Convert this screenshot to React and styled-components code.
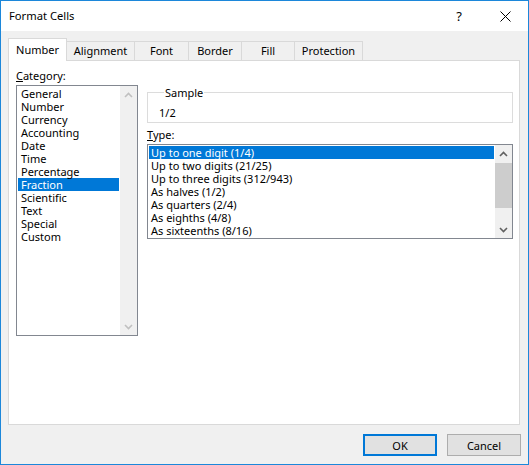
import React from "react";
import styled, { createGlobalStyle } from "styled-components";

const Global = createGlobalStyle`
  html, body { margin: 0; padding: 0; background: #ffffff; }
  body { font-family: "Noto Sans", "Open Sans", sans-serif; font-size: 11px; color: #000; }
  * { box-sizing: border-box; }
`;

const Window = styled.div`
  width: 529px;
  height: 465px;
  border: 1px solid #1c87da;
  display: flex;
  flex-direction: column;
  background: #f0f0f0;
`;

const TitleBar = styled.div`
  height: 30px;
  background: #ffffff;
  display: flex;
  align-items: center;
  padding-left: 8px;
  font-size: 11.2px;
  flex-shrink: 0;
`;

const Title = styled.div`
  flex: 1;
  margin-top: -1px;
`;

const TitleButton = styled.div`
  width: ${(p) => p.$w}px;
  height: 30px;
  display: flex;
  align-items: center;
  justify-content: center;
  font-size: 13px;
`;

const TabStrip = styled.div`
  display: flex;
  align-items: flex-end;
  padding: 7px 0 0 7px;
  height: 29px;
  flex-shrink: 0;
`;

const Tab = styled.div`
  position: relative;
  height: ${(p) => (p.$active ? 23 : 19)}px;
  width: ${(p) => p.$w}px;
  margin-bottom: ${(p) => (p.$active ? -1 : 0)}px;
  background: ${(p) => (p.$active ? "#ffffff" : "#f0f0f0")};
  border: 1px solid #d9d9d9;
  border-left-width: ${(p) => (p.$first || p.$active ? 1 : 0)}px;
  border-bottom: none;
  z-index: ${(p) => (p.$active ? 2 : 1)};
  display: flex;
  justify-content: center;
  padding-top: ${(p) => (p.$active ? 3 : 1)}px;
  line-height: 15px;
`;

const Panel = styled.div`
  margin: 0 8px 0 7px;
  height: 365px;
  background: #ffffff;
  border: 1px solid #d9d9d9;
  display: grid;
  grid-template-columns: 122px 365px;
  column-gap: 9px;
  padding: 7px 0 0 7px;
  flex-shrink: 0;
`;

const Column = styled.div`
  display: flex;
  flex-direction: column;
  padding-top: ${(p) => p.$top || 0}px;
`;

const Label = styled.div`
  line-height: 15px;
  height: 15px;
  margin-bottom: 2px;
`;

const ListBox = styled.div`
  height: ${(p) => p.$h}px;
  width: ${(p) => p.$w}px;
  border: 1px solid #828790;
  display: flex;
  background: #fff;
`;

const Items = styled.div`
  flex: 1;
  padding: 1px;
`;

const Item = styled.div`
  height: 13px;
  line-height: 13px;
  padding-left: ${(p) => p.$indent}px;
  white-space: nowrap;
  background: ${(p) => (p.$sel ? "#0078d7" : "transparent")};
  color: ${(p) => (p.$sel ? "#ffffff" : "#000000")};
`;

const ScrollBar = styled.div`
  width: 17px;
  background: #f0f0f0;
  display: flex;
  flex-direction: column;
`;

const ScrollArrow = styled.div`
  height: 17px;
  display: flex;
  align-items: center;
  justify-content: center;
  flex-shrink: 0;
`;

const Track = styled.div`
  flex: 1;
  padding-top: 1px;
`;

const Thumb = styled.div`
  height: 45px;
  background: #cdcdcd;
`;

const GroupBox = styled.fieldset`
  margin: 0;
  padding: 7px 0 0 11px;
  border: 1px solid #dcdcdc;
  height: 38px;
  min-width: 0;
  width: 366px;
`;

const Legend = styled.legend`
  padding: 0 1px;
  margin-left: 5px;
  line-height: 15px;
`;

const SampleText = styled.div`
  line-height: 13px;
  margin-top: -1px;
`;

const TypeLabel = styled(Label)`
  margin-top: 4px;
`;

const Footer = styled.div`
  display: flex;
  justify-content: flex-end;
  gap: 10px;
  padding: 9px 7px 0 0;
`;

const Button = styled.div`
  width: 74px;
  height: 22px;
  background: #e1e1e1;
  border: ${(p) => (p.$default ? "2px solid #0078d7" : "1px solid #adadad")};
  display: flex;
  align-items: center;
  justify-content: center;
  line-height: 15px;
`;

const Chevron = ({ up, color }) => (
  <svg width="9" height="6" viewBox="0 0 9 6">
    <path
      d={up ? "M1 5 L4.5 1.5 L8 5" : "M1 1 L4.5 4.5 L8 1"}
      fill="none"
      stroke={color}
      strokeWidth="1.6"
    />
  </svg>
);

const categories = [
  "General",
  "Number",
  "Currency",
  "Accounting",
  "Date",
  "Time",
  "Percentage",
  "Fraction",
  "Scientific",
  "Text",
  "Special",
  "Custom",
];

const types = [
  "Up to one digit (1/4)",
  "Up to two digits (21/25)",
  "Up to three digits (312/943)",
  "As halves (1/2)",
  "As quarters (2/4)",
  "As eighths (4/8)",
  "As sixteenths (8/16)",
];

const tabs = [
  ["Number", 59],
  ["Alignment", 68],
  ["Font", 54],
  ["Border", 53],
  ["Fill", 53],
  ["Protection", 68],
];

export default function App() {
  return (
    <>
      <Global />
      <Window>
        <TitleBar>
          <Title>Format Cells</Title>
          <TitleButton $w={46}>?</TitleButton>
          <TitleButton $w={46}>
            <svg width="11" height="11" viewBox="0 0 11 11">
              <path d="M0.5 0.5 L10.5 10.5 M10.5 0.5 L0.5 10.5" stroke="#000" strokeWidth="1" />
            </svg>
          </TitleButton>
        </TitleBar>
        <TabStrip>
          {tabs.map(([t, w], i) => (
            <Tab key={t} $w={w} $active={i === 0} $first={i === 0}>
              {t}
            </Tab>
          ))}
        </TabStrip>
        <Panel>
          <Column>
            <Label>
              <u>C</u>ategory:
            </Label>
            <ListBox $w={122} $h={251}>
              <Items>
                {categories.map((c) => (
                  <Item key={c} $indent={3} $sel={c === "Fraction"}>
                    {c}
                  </Item>
                ))}
              </Items>
              <ScrollBar>
                <ScrollArrow>
                  <Chevron up color="#c0c0c0" />
                </ScrollArrow>
                <Track />
                <ScrollArrow>
                  <Chevron color="#c0c0c0" />
                </ScrollArrow>
              </ScrollBar>
            </ListBox>
          </Column>
          <Column $top={17}>
            <GroupBox>
              <Legend>Sample</Legend>
              <SampleText>1/2</SampleText>
            </GroupBox>
            <TypeLabel>
              <u>T</u>ype:
            </TypeLabel>
            <ListBox $w={366} $h={95}>
              <Items>
                {types.map((t, i) => (
                  <Item key={t} $indent={2} $sel={i === 0}>
                    {t}
                  </Item>
                ))}
              </Items>
              <ScrollBar>
                <ScrollArrow>
                  <Chevron up color="#606060" />
                </ScrollArrow>
                <Track>
                  <Thumb />
                </Track>
                <ScrollArrow>
                  <Chevron color="#606060" />
                </ScrollArrow>
              </ScrollBar>
            </ListBox>
          </Column>
        </Panel>
        <Footer>
          <Button $default>OK</Button>
          <Button>Cancel</Button>
        </Footer>
      </Window>
    </>
  );
}
